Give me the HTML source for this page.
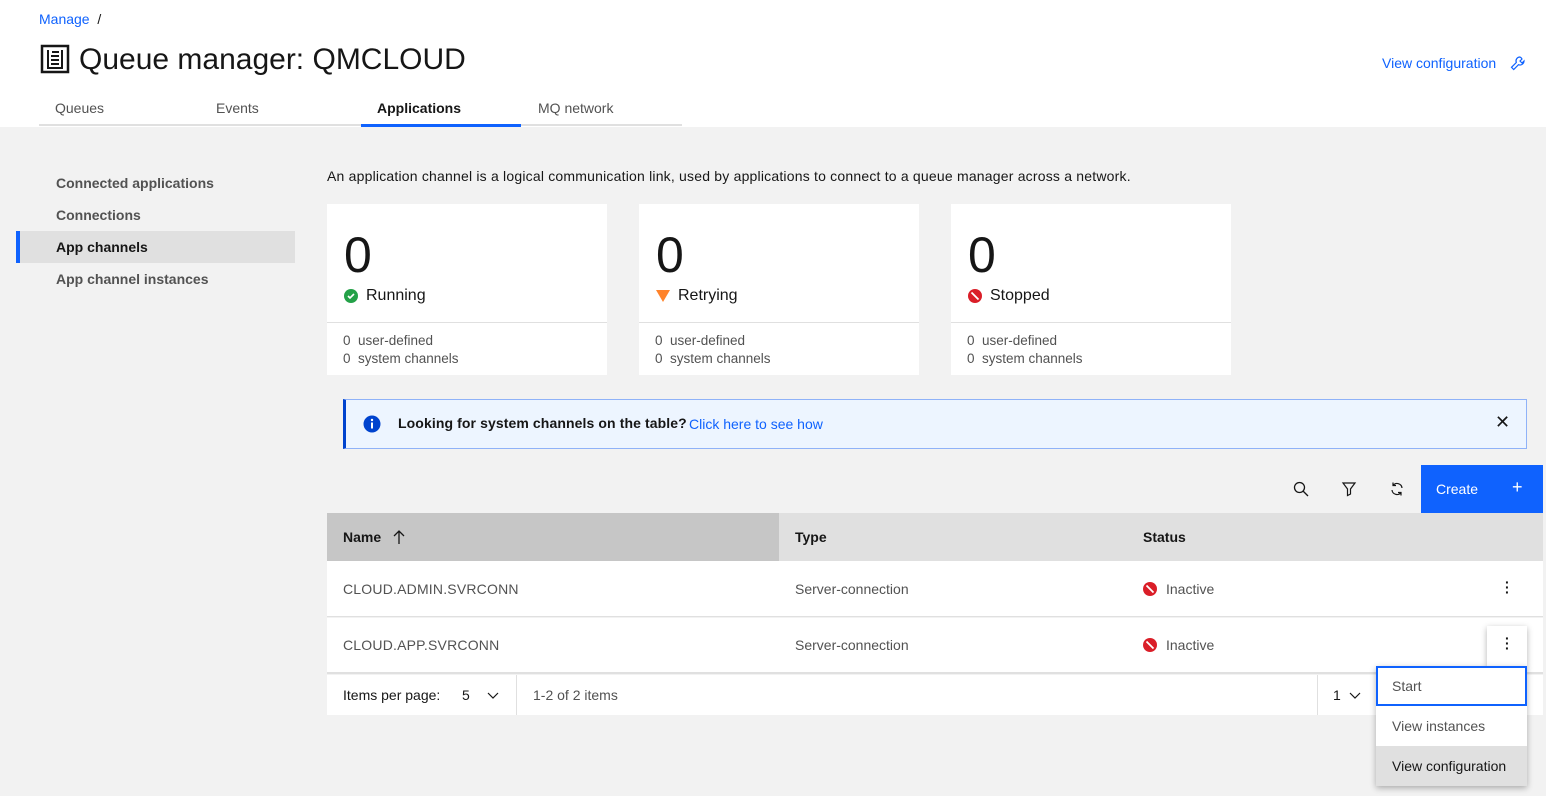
<!DOCTYPE html><html><head><style>
*{margin:0;padding:0;box-sizing:border-box}
body{width:1546px;height:796px;overflow:hidden;background:#f2f2f2;font-family:"Liberation Sans",sans-serif;color:#161616;position:relative;font-size:14px}
.a{position:absolute;white-space:nowrap}
.card{position:absolute;top:204px;width:280px;height:171px;background:#fff}
.card .n{position:absolute;left:17px;top:22px;font-size:50px;font-weight:300}
.card .s{position:absolute;left:17px;top:83px;font-size:16px;display:flex;align-items:center;gap:8px}
.card hr{position:absolute;top:118px;left:0;width:100%;border:0;border-top:1px solid #e0e0e0}
.card .d{position:absolute;left:16px;top:128px;font-size:13.5px;color:#525252;line-height:18px}
</style></head><body>
<div class="a" style="left:0;top:0;width:1546px;height:127px;background:#fff"></div>
<div class="a" style="left:39px;top:11px;font-size:14px;color:#0f62fe">Manage <span style="color:#161616">&nbsp;/</span></div>
<svg class="a" style="left:40px;top:44px" width="30" height="30" viewBox="0 0 30 30"><rect x="2" y="2" width="26" height="26" fill="none" stroke="#161616" stroke-width="2.5"/><path d="M8 6v18h14V6M11 12h8M11 16h8M11 20h8M12 8h7" fill="none" stroke="#161616" stroke-width="2"/></svg>
<div class="a" style="left:79px;top:43px;font-size:30px;font-weight:300">Queue manager: QMCLOUD</div>
<div class="a" style="left:1382px;top:55px;font-size:14px;color:#0f62fe">View configuration</div>
<svg class="a" style="left:1510px;top:55px" width="16" height="16" viewBox="0 0 16 16"><path d="M10 2a4 4 0 0 0-3.7 5.5L1.5 12.3l2.2 2.2 4.8-4.8A4 4 0 0 0 14 6l-2 2-2-2 2-2A4 4 0 0 0 10 2z" fill="none" stroke="#0f62fe" stroke-width="1.2"/></svg>
<div class="a" style="left:39px;top:124px;width:643px;height:2px;background:#e0e0e0"></div>
<div class="a" style="left:361px;top:124px;width:160px;height:3px;background:#0f62fe"></div>
<div class="a" style="left:55px;top:100px;color:#525252">Queues</div>
<div class="a" style="left:216px;top:100px;color:#525252">Events</div>
<div class="a" style="left:377px;top:100px;font-weight:bold">Applications</div>
<div class="a" style="left:538px;top:100px;color:#525252">MQ network</div>
<div class="a" style="left:56px;top:175px;font-weight:bold;color:#525252">Connected applications</div>
<div class="a" style="left:56px;top:207px;font-weight:bold;color:#525252">Connections</div>
<div class="a" style="left:16px;top:231px;width:279px;height:32px;background:#e0e0e0;border-left:4px solid #0f62fe"></div>
<div class="a" style="left:56px;top:239px;font-weight:bold">App channels</div>
<div class="a" style="left:56px;top:271px;font-weight:bold;color:#525252">App channel instances</div>
<div class="a" style="left:327px;top:168px;font-size:14px;letter-spacing:0.2px">An application channel is a logical communication link, used by applications to connect to a queue manager across a network.</div>
<div class="card" style="left:327px"><div class="n">0</div><div class="s"><svg width="14" height="14"><circle cx="7" cy="7" r="7" fill="#24a148"/><path d="M4 7l2 2 4-4" stroke="#fff" stroke-width="1.6" fill="none"/></svg>Running</div><hr><div class="d">0&nbsp; user-defined<br>0&nbsp; system channels</div></div>
<div class="card" style="left:639px"><div class="n">0</div><div class="s"><svg width="14" height="14"><path d="M0 1h14L7 13z" fill="#ff832b"/></svg>Retrying</div><hr><div class="d">0&nbsp; user-defined<br>0&nbsp; system channels</div></div>
<div class="card" style="left:951px"><div class="n">0</div><div class="s"><svg width="14" height="14"><circle cx="7" cy="7" r="7" fill="#da1e28"/><path d="M3.5 3.5l7 7" stroke="#fff" stroke-width="1.8"/></svg>Stopped</div><hr><div class="d">0&nbsp; user-defined<br>0&nbsp; system channels</div></div>
<div class="a" style="left:343px;top:399px;width:1184px;height:50px;background:#edf5ff;border:1px solid #8fb2f8;border-left:3px solid #0043ce"></div>
<svg class="a" style="left:363px;top:415px" width="18" height="18"><circle cx="9" cy="9" r="8.5" fill="#0043ce"/><rect x="8" y="7.5" width="2" height="6" fill="#fff"/><circle cx="9" cy="5" r="1.2" fill="#fff"/></svg>
<div class="a" style="left:398px;top:415px;font-weight:bold;letter-spacing:0.1px">Looking for system channels on the table?</div>
<div class="a" style="left:689px;top:416px;color:#0f62fe">Click here to see how</div>
<div class="a" style="left:1495px;top:412px;font-size:18px">✕</div>
<svg class="a" style="left:1293px;top:481px" width="16" height="16"><circle cx="6.5" cy="6.5" r="5" fill="none" stroke="#161616" stroke-width="1.3"/><path d="M10 10l5 5" stroke="#161616" stroke-width="1.3"/></svg>
<svg class="a" style="left:1341px;top:481px" width="16" height="16"><path d="M2 2h12l-4.5 6v5l-3 1.5V8z" fill="none" stroke="#161616" stroke-width="1.2"/></svg>
<svg class="a" style="left:1389px;top:481px" width="16" height="16"><path d="M13 7a5 5 0 0 0-9-2.5M3 9a5 5 0 0 0 9 2.5M4 1.5v3h3M12 14.5v-3H9" fill="none" stroke="#161616" stroke-width="1.2"/></svg>
<div class="a" style="left:1421px;top:465px;width:122px;height:48px;background:#0f62fe;color:#fff"><span class="a" style="left:15px;top:16px">Create</span><span class="a" style="left:91px;top:12px;font-size:18px">+</span></div>
<div class="a" style="left:327px;top:513px;width:1216px;height:48px;background:#e0e0e0"></div>
<div class="a" style="left:327px;top:513px;width:452px;height:48px;background:#c6c6c6"></div>
<div class="a" style="left:343px;top:529px;font-weight:bold">Name</div>
<svg class="a" style="left:391px;top:529px" width="16" height="16"><path d="M8 15V2M3 7l5-5 5 5" fill="none" stroke="#161616" stroke-width="1.3"/></svg>
<div class="a" style="left:795px;top:529px;font-weight:bold">Type</div>
<div class="a" style="left:1143px;top:529px;font-weight:bold">Status</div>
<div class="a" style="left:327px;top:561px;width:1216px;height:56px;background:#fff;border-bottom:1px solid #e0e0e0"></div>
<div class="a" style="left:327px;top:618px;width:1216px;height:56px;background:#fff;border-bottom:2px solid #e0e0e0"></div>
<div class="a" style="left:343px;top:581px;color:#525252;letter-spacing:0.2px">CLOUD.ADMIN.SVRCONN</div>
<div class="a" style="left:795px;top:581px;color:#525252">Server-connection</div>
<div class="a" style="left:343px;top:637px;color:#525252;letter-spacing:0.2px">CLOUD.APP.SVRCONN</div>
<div class="a" style="left:795px;top:637px;color:#525252">Server-connection</div>
<svg class="a" style="left:1143px;top:582px" width="14" height="14"><circle cx="7" cy="7" r="7" fill="#da1e28"/><path d="M3.5 3.5l7 7" stroke="#fff" stroke-width="1.8"/></svg>
<div class="a" style="left:1166px;top:581px;color:#525252">Inactive</div>
<svg class="a" style="left:1143px;top:638px" width="14" height="14"><circle cx="7" cy="7" r="7" fill="#da1e28"/><path d="M3.5 3.5l7 7" stroke="#fff" stroke-width="1.8"/></svg>
<div class="a" style="left:1166px;top:637px;color:#525252">Inactive</div>
<div class="a" style="left:1505px;top:580px;font-weight:bold;line-height:5px;font-size:14px">·<br>·<br>·</div>
<div class="a" style="left:1487px;top:626px;width:40px;height:40px;background:#fff;box-shadow:0 2px 6px rgba(0,0,0,.3)"></div>
<div class="a" style="left:1505px;top:636px;font-weight:bold;line-height:5px;font-size:14px">·<br>·<br>·</div>
<div class="a" style="left:327px;top:675px;width:1216px;height:40px;background:#fff"></div>
<div class="a" style="left:516px;top:675px;width:1px;height:40px;background:#e0e0e0"></div>
<div class="a" style="left:1317px;top:675px;width:1px;height:40px;background:#e0e0e0"></div>
<div class="a" style="left:343px;top:687px">Items per page:</div>
<div class="a" style="left:462px;top:687px">5</div>
<svg class="a" style="left:487px;top:690px" width="12" height="10"><path d="M1 3l5 5 5-5" fill="none" stroke="#161616" stroke-width="1.2"/></svg>
<div class="a" style="left:533px;top:687px;color:#525252">1-2 of 2 items</div>
<div class="a" style="left:1333px;top:687px">1</div>
<svg class="a" style="left:1349px;top:690px" width="12" height="10"><path d="M1 3l5 5 5-5" fill="none" stroke="#161616" stroke-width="1.2"/></svg>
<div class="a" style="left:1376px;top:666px;width:151px;height:120px;background:#fff;box-shadow:0 2px 6px rgba(0,0,0,.3)"></div>
<div class="a" style="left:1376px;top:666px;width:151px;height:40px;border:2px solid #0f62fe"></div>
<div class="a" style="left:1392px;top:678px;color:#525252">Start</div>
<div class="a" style="left:1392px;top:718px;color:#525252">View instances</div>
<div class="a" style="left:1376px;top:746px;width:151px;height:40px;background:#e0e0e0"></div>
<div class="a" style="left:1392px;top:758px">View configuration</div>
</body></html>
